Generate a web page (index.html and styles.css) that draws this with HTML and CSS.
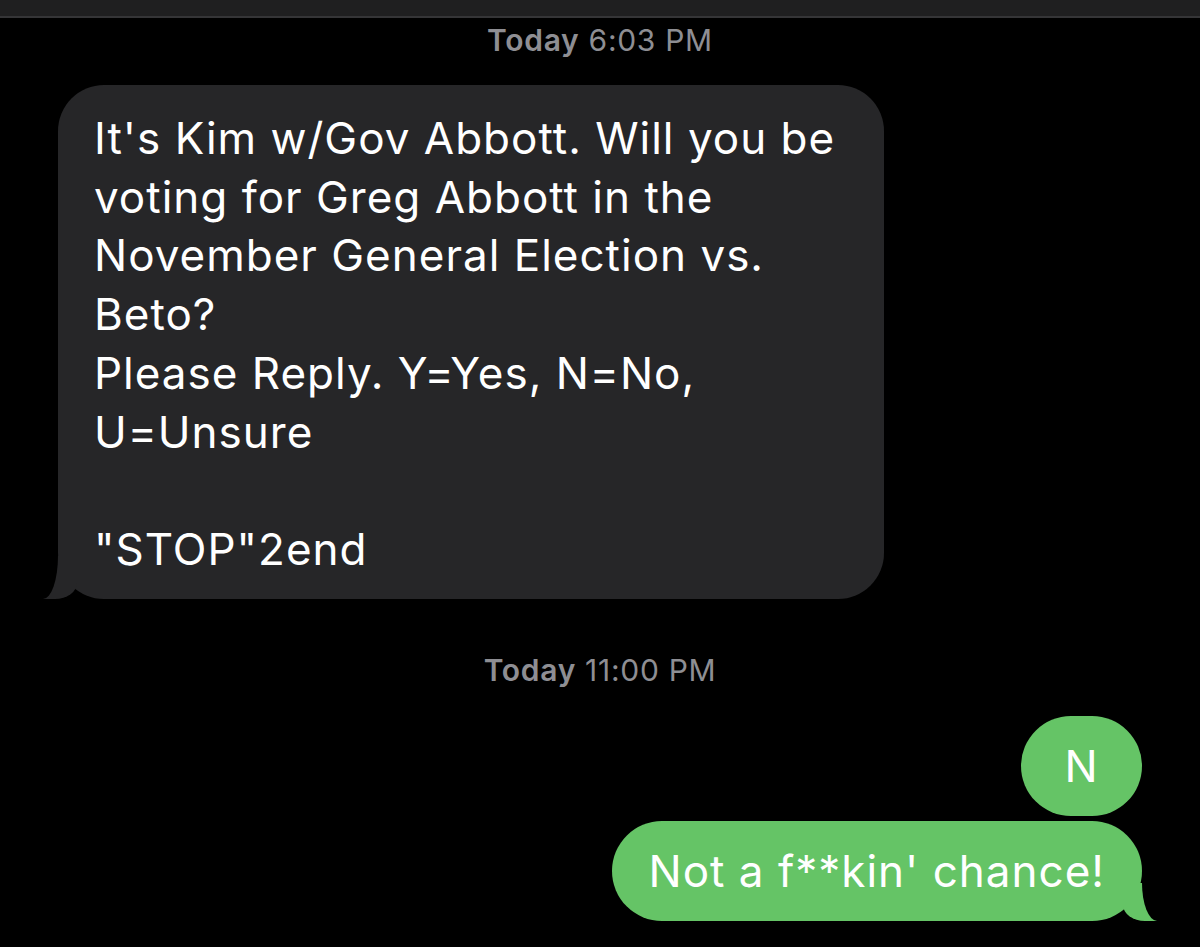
FILE: index.html
```html
<!DOCTYPE html>
<html>
<head>
<meta charset="utf-8">
<link rel="stylesheet" href="styles.css">
</head>
<body>
<div class="topbar"></div>
<main class="thread">
  <div class="stamp stamp-first"><b>Today</b> 6:03 PM</div>
  <div class="row row-in">
    <div class="bubble bubble-in tail-in">It's Kim w/Gov Abbott. Will you be<br>voting for Greg Abbott in the<br>November General Election vs.<br>Beto?<br>Please Reply. Y=Yes, N=No,<br>U=Unsure<br><br>"STOP"2end</div>
  </div>
  <div class="stamp stamp-second"><b>Today</b> 11:00 PM</div>
  <div class="row row-out">
    <div class="bubble bubble-out bubble-short">N</div>
  </div>
  <div class="row row-out row-tight">
    <div class="bubble bubble-out tail-out">Not a f**kin' chance!</div>
  </div>
</main>
</body>
</html>
```

FILE: styles.css
```css
html, body {
  margin: 0;
  padding: 0;
  background: #000;
}
body {
  width: 1200px;
  height: 947px;
  overflow: hidden;
  font-family: "Inter", "Roboto", "Liberation Sans", sans-serif;
  color: #fff;
}
.topbar {
  height: 16px;
  background: #1f1f20;
  border-bottom: 2px solid #353537;
}
.thread {
  display: flex;
  flex-direction: column;
  padding: 0 58px;
}
.stamp {
  text-align: center;
  color: #8e8e93;
  font-size: 30px;
  line-height: 34px;
  font-weight: 400;
  letter-spacing: 0.7px;
}
.stamp b {
  font-weight: 600;
}
.stamp-first {
  margin-top: 5px;
}
.stamp-second {
  margin-top: 54px;
}
.row {
  display: flex;
}
.row-in {
  justify-content: flex-start;
  margin-top: 28px;
}
.row-out {
  justify-content: flex-end;
  margin-top: 29px;
}
.row-tight {
  margin-top: 5px;
}
.bubble {
  position: relative;
  font-size: 44px;
  line-height: 58.7px;
  letter-spacing: 1px;
  border-radius: 46px;
  box-sizing: border-box;
}
.bubble-in {
  background: #262628;
  width: 826px;
  padding: 24px 36px 20px 36px;
}
.bubble-out {
  background: #65c466;
  height: 100px;
  padding: 21px 37px;
  border-radius: 50px;
}
.bubble-short {
  width: 121px;
  text-align: center;
  padding: 21px 0;
}
.tail-in::before {
  content: "";
  position: absolute;
  left: -15px;
  bottom: 0;
  width: 34px;
  height: 43px;
  background: #262628;
  border-bottom-right-radius: 22px 16px;
}
.tail-in::after {
  content: "";
  position: absolute;
  left: -40px;
  bottom: 0;
  width: 40px;
  height: 43px;
  background: #000;
  border-bottom-right-radius: 15px 43px;
}
.tail-out::before {
  content: "";
  position: absolute;
  right: -15px;
  bottom: 0;
  width: 34px;
  height: 38px;
  background: #65c466;
  border-bottom-left-radius: 22px 16px;
}
.tail-out::after {
  content: "";
  position: absolute;
  right: -40px;
  bottom: 0;
  width: 40px;
  height: 38px;
  background: #000;
  border-bottom-left-radius: 15px 38px;
}
```
